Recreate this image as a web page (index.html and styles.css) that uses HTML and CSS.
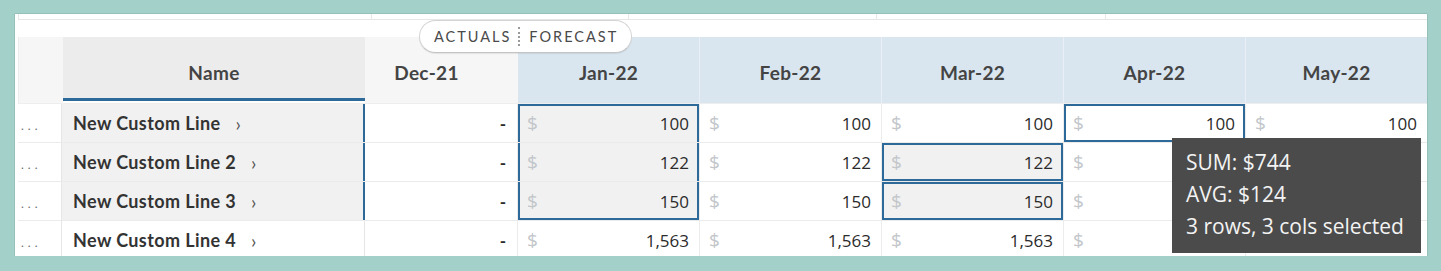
FILE: index.html
```html
<!DOCTYPE html>
<html>
<head>
<meta charset="utf-8">
<link rel="stylesheet" href="styles.css">
</head>
<body>
<div class="frame">
  <div class="strip">
    <div class="sc s1"></div><div class="sc s2"></div><div class="sc s3"></div><div class="sc s4"></div><div class="sc s5"></div>
  </div>
  <div class="pill"><span class="pill-a">ACTUALS</span><span class="pill-sep"></span><span class="pill-f">FORECAST</span></div>
  <div class="grid">
    <div class="hd hd-handle"></div>
    <div class="hd hd-name">Name</div>
    <div class="hd hd-actual">Dec-21</div>
    <div class="hd hd-fc">Jan-22</div>
    <div class="hd hd-fc">Feb-22</div>
    <div class="hd hd-fc">Mar-22</div>
    <div class="hd hd-fc">Apr-22</div>
    <div class="hd hd-fc hd-last">May-22</div>

    <div class="c handle">...</div>
    <div class="c name sel-name">New Custom Line<span class="chev">›</span></div>
    <div class="c dec">-</div>
    <div class="c val box-top box-grey"><span class="cur">$</span><span class="num">100</span></div>
    <div class="c val"><span class="cur">$</span><span class="num">100</span></div>
    <div class="c val"><span class="cur">$</span><span class="num">100</span></div>
    <div class="c val box-single"><span class="cur">$</span><span class="num">100</span></div>
    <div class="c val last"><span class="cur">$</span><span class="num">100</span></div>

    <div class="c handle">...</div>
    <div class="c name sel-name">New Custom Line 2<span class="chev">›</span></div>
    <div class="c dec">-</div>
    <div class="c val box-mid box-grey"><span class="cur">$</span><span class="num">122</span></div>
    <div class="c val"><span class="cur">$</span><span class="num">122</span></div>
    <div class="c val box-single box-grey"><span class="cur">$</span><span class="num">122</span></div>
    <div class="c val"><span class="cur">$</span></div>
    <div class="c val last"></div>

    <div class="c handle">...</div>
    <div class="c name sel-name">New Custom Line 3<span class="chev">›</span></div>
    <div class="c dec">-</div>
    <div class="c val box-bot box-grey"><span class="cur">$</span><span class="num">150</span></div>
    <div class="c val"><span class="cur">$</span><span class="num">150</span></div>
    <div class="c val box-single box-grey"><span class="cur">$</span><span class="num">150</span></div>
    <div class="c val"><span class="cur">$</span></div>
    <div class="c val last"></div>

    <div class="c handle">...</div>
    <div class="c name">New Custom Line 4<span class="chev">›</span></div>
    <div class="c dec">-</div>
    <div class="c val"><span class="cur">$</span><span class="num">1,563</span></div>
    <div class="c val"><span class="cur">$</span><span class="num">1,563</span></div>
    <div class="c val"><span class="cur">$</span><span class="num">1,563</span></div>
    <div class="c val"><span class="cur">$</span></div>
    <div class="c val last"></div>
  </div>
  <div class="tip">
    <div>SUM: $744</div>
    <div>AVG: $124</div>
    <div>3 rows, 3 cols selected</div>
  </div>
</div>
</body>
</html>
```

FILE: styles.css
```css
* { box-sizing: border-box; }
html, body { margin: 0; padding: 0; }
body {
  background: #a3d0c8;
  width: 1441px;
  height: 271px;
  overflow: hidden;
  font-family: "Lato", "Open Sans", sans-serif;
}
.frame {
  position: relative;
  margin: 14px 14px 0 15px;
  height: 242px;
  background: #ffffff;
  padding-left: 3px;
  overflow: hidden;
  box-shadow: -1px 0 0 #93c0b8, 0 -1px 0 #93c0b8, 1px 0 0 #93c0b8;
}
.strip {
  display: flex;
  height: 6px;
  border-bottom: 1px solid #e6e6e6;
}
.sc { height: 100%; border-left: 1px solid #e8e8e8; }
.s1 { width: 353px; }
.s2 { width: 257px; }
.s3 { width: 248px; }
.s4 { width: 229px; }
.s5 { flex: 1; }

.pill {
  position: absolute;
  left: 404px;
  top: 6px;
  width: 213px;
  height: 33px;
  background: #fff;
  border: 1px solid #d4d4d4;
  border-bottom-color: #c4c4c4;
  border-radius: 17px;
  box-shadow: 0 1px 1px rgba(0,0,0,0.08);
  display: flex;
  align-items: center;
  padding-left: 14px;
  font-size: 14.5px;
  letter-spacing: 2px;
  color: #4a4a4a;
  z-index: 3;
}
.pill-sep {
  width: 0;
  height: 19px;
  border-left: 2px dotted #9a9a9a;
  margin: 0 9px 0 7px;
}

.grid {
  display: grid;
  grid-template-columns: 44px 303px 153px 182px 182px 182px 182px 181px;
  margin-top: 17px;
}
.hd {
  height: 67px;
  border-bottom: 1px solid #eeeeee;
  display: flex;
  align-items: flex-end;
  justify-content: center;
  padding-bottom: 19px;
  font-weight: 700;
  font-size: 19px;
  letter-spacing: 0.3px;
  line-height: 22px;
  color: #444444;
}
.hd-handle { background: #f6f6f6; border-left: 1px solid #ececec; }
.hd-name {
  background: #ececec;
  box-shadow: inset 0 -2px 0 #ffffff, inset 0 -5px 0 #2d6a99;
  border-left: 1px solid #f6f6f6;
}
.hd-actual { background: #f6f6f6; padding-right: 30px; }
.hd-fc { background: #d9e6f0; border-right: 1px solid #e9eff4; }
.hd-last { border-right: none; }

.c {
  height: 39px;
  border-bottom: 1px solid #ebebeb;
  display: flex;
  align-items: center;
  font-size: 17px;
  color: #2b2b2b;
}
.handle {
  border-right: 1px solid #e6e6e6;
  padding-left: 3px;
  padding-top: 5px;
  color: #6a6a6a;
  font-size: 12px;
  letter-spacing: 4px;
}
.name {
  padding-left: 11px;
  font-weight: 700;
  font-size: 18px;
  letter-spacing: 0.4px;
  color: #333333;
  border-right: 1px solid #e6e6e6;
}
.sel-name {
  background: #f1f1f1;
  border-right: none;
  box-shadow: inset -2px 0 0 #2d6a99;
}
.chev {
  margin-left: 15px;
  font-weight: 400;
  color: #555555;
  font-size: 19px;
}
.dec {
  justify-content: flex-end;
  padding-right: 11px;
  font-weight: 700;
  border-right: 1px solid #ececec;
}
.val {
  justify-content: space-between;
  padding: 0 10px 0 9px;
  border-right: 1px solid #ececec;
  font-family: "Open Sans", sans-serif;
  font-size: 17px;
}
.val.last { border-right: none; }
.cur { color: #c2c6ca; font-size: 19px; }
.num { color: #2b2b2b; }

.box-grey { background: #f1f1f1; }
.box-top { box-shadow: inset 2px 0 0 #2d6a99, inset -2px 0 0 #2d6a99, inset 0 2px 0 #2d6a99; }
.box-mid { box-shadow: inset 2px 0 0 #2d6a99, inset -2px 0 0 #2d6a99; }
.box-bot { box-shadow: inset 2px 0 0 #2d6a99, inset -2px 0 0 #2d6a99, inset 0 -2px 0 #2d6a99; }
.box-single { box-shadow: inset 0 0 0 2px #2d6a99; }

.tip {
  position: absolute;
  left: 1157px;
  top: 124px;
  width: 249px;
  height: 115px;
  background: #4b4b4b;
  color: #f3f3f3;
  font-family: "Open Sans", sans-serif;
  font-size: 21px;
  line-height: 32px;
  padding: 8px 0 0 14px;
  z-index: 4;
}
```
